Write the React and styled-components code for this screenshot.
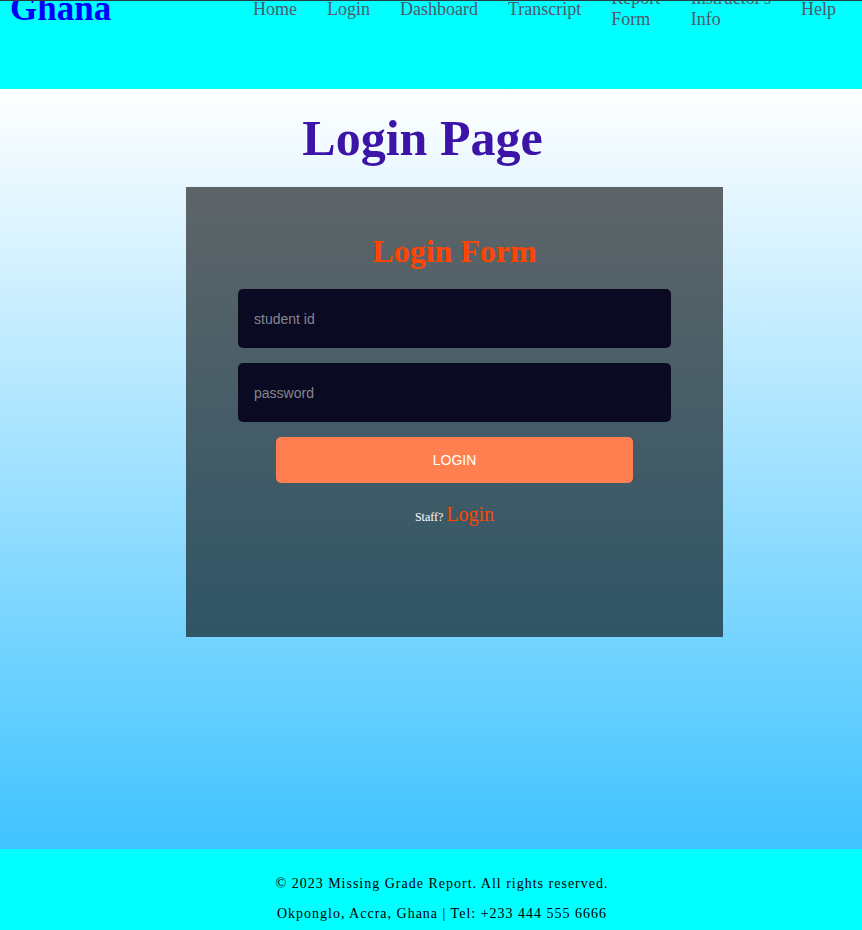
import React from "react";
import styled, { createGlobalStyle } from "styled-components";

const GlobalStyle = createGlobalStyle`
  html, body {
    margin: 0;
    padding: 0;
  }
  body {
    font-family: "Liberation Serif", "Times New Roman", serif;
    background: #00ffff;
  }
`;

const Header = styled.header`
  position: relative;
  height: 89px;
  background: #00ffff;
  overflow: hidden;

  &::before {
    content: "";
    position: absolute;
    top: 0;
    left: 0;
    right: 0;
    height: 1px;
    background: #2c3b3d;
    z-index: 1;
  }
`;

const Bar = styled.div`
  display: flex;
  align-items: center;
  height: 40px;
  margin-top: -11px;
  padding: 0 26px 0 10px;
`;

const Logo = styled.div`
  flex: 0 0 243px;
  font-size: 35px;
  font-weight: bold;
  color: #0000ff;
`;

const Nav = styled.nav`
  flex: 1;
  min-width: 0;
  display: flex;
  align-items: center;
  gap: 30px;
`;

const NavLink = styled.a`
  font-size: 18px;
  color: #4d5a6a;
  text-decoration: none;
  line-height: 20.7px;
`;

const Main = styled.main`
  display: flex;
  flex-direction: column;
  align-items: center;
  height: 760px;
  padding-top: 22px;
  box-sizing: border-box;
  background: linear-gradient(to bottom, #ffffff, #40c3ff);
`;

const Title = styled.h1`
  margin: 0 17px 21px 0;
  font-size: 50px;
  line-height: 55px;
  font-weight: bold;
  color: #3d14a8;
`;

const Card = styled.section`
  width: 537px;
  height: 450px;
  margin-left: 47px;
  padding: 47px 52px 0;
  box-sizing: border-box;
  display: flex;
  flex-direction: column;
  align-items: center;
  background: linear-gradient(to bottom, #5e6568, #2f5566);
`;

const FormTitle = styled.h2`
  margin: 0 0 20px;
  font-size: 32px;
  line-height: 35px;
  font-weight: bold;
  color: #ff4500;
`;

const Input = styled.input`
  width: 100%;
  height: 59px;
  margin-bottom: 15px;
  padding: 0 16px;
  box-sizing: border-box;
  border: none;
  border-radius: 5px;
  background: #0a0a22;
  color: #ddd;
  font-family: "Liberation Sans", Arial, sans-serif;
  font-size: 14px;
  outline: none;

  &::placeholder {
    color: #86868e;
  }
`;

const Button = styled.button`
  width: 357px;
  height: 46px;
  border: none;
  border-radius: 5px;
  background: #ff7f50;
  color: #fff;
  font-family: "Liberation Sans", Arial, sans-serif;
  font-size: 14px;
  cursor: pointer;
`;

const StaffLine = styled.p`
  margin: 20px 0 0;
  color: #fff;
  font-size: 12px;
`;

const StaffLink = styled.a`
  color: #ff4500;
  font-size: 20px;
  text-decoration: none;
`;

const Footer = styled.footer`
  background: #00ffff;
  padding: 20px 0 10px 22px;
  text-align: center;
`;

const FooterLine = styled.p`
  margin: 0;
  font-size: 14px;
  line-height: 30px;
  letter-spacing: 1px;
  color: #000;
`;

const links = ["Home", "Login", "Dashboard", "Transcript", "Report Form", "Instructor's Info", "Help"];

export default function App() {
  return (
    <>
      <GlobalStyle />
      <Header>
        <Bar>
          <Logo>Ghana</Logo>
          <Nav>
            {links.map((l) => (
              <NavLink key={l} href="#">
                {l}
              </NavLink>
            ))}
          </Nav>
        </Bar>
      </Header>
      <Main>
        <Title>Login Page</Title>
        <Card>
          <FormTitle>Login Form</FormTitle>
          <Input type="text" placeholder="student id" />
          <Input type="password" placeholder="password" />
          <Button>LOGIN</Button>
          <StaffLine>
            Staff? <StaffLink href="#">Login</StaffLink>
          </StaffLine>
        </Card>
      </Main>
      <Footer>
        <FooterLine>© 2023 Missing Grade Report. All rights reserved.</FooterLine>
        <FooterLine>Okponglo, Accra, Ghana | Tel: +233 444 555 6666</FooterLine>
      </Footer>
    </>
  );
}
